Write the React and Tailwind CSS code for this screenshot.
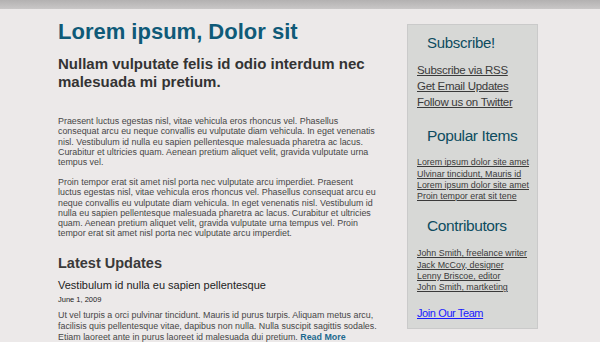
export default function App() {
    const popular = [
        "Lorem ipsum dolor site amet",
        "Ulvinar tincidunt, Mauris id",
        "Lorem ipsum dolor site amet",
        "Proin tempor erat sit tene",
    ];
    const contributors = [
        "John Smith, freelance writer",
        "Jack McCoy, designer",
        "Lenny Briscoe, editor",
        "John Smith, martketing",
    ];

    return (
        <div className="min-h-screen bg-[#ece9e9] font-['Liberation_Sans',Arial,sans-serif] text-[#474747]">
            {/* top strip */}
            <div className="h-[9px] bg-gradient-to-b from-[#b3b1b1] to-[#c9c7c7]" />

            <div className="flex pl-[58px]">
                {/* main column */}
                <div className="w-[320px]">
                    <h1 className="mt-[9.5px] text-[22px] font-bold leading-[26px] text-[#0f5a78]">Lorem ipsum, Dolor sit</h1>
                    <h2 className="mt-[10px] text-[15px] font-bold leading-[18.3px] text-[#333]">
                        Nullam vulputate felis id odio interdum nec malesuada mi pretium.
                    </h2>

                    <p className="mt-[25px] text-[8.9px] leading-[10.2px]">
                        Praesent luctus egestas nisl, vitae vehicula eros rhoncus vel. Phasellus consequat arcu eu neque convallis eu vulputate diam vehicula. In eget venenatis nisl. Vestibulum id nulla eu sapien pellentesque malesuada pharetra ac lacus. Curabitur et ultricies quam. Aenean pretium aliquet velit, gravida vulputate urna tempus vel.
                    </p>
                    <p className="mt-[10px] text-[8.9px] leading-[10.2px]">
                        Proin tempor erat sit amet nisl porta nec vulputate arcu imperdiet. Praesent luctus egestas nisl, vitae vehicula eros rhoncus vel. Phasellus consequat arcu eu neque convallis eu vulputate diam vehicula. In eget venenatis nisl. Vestibulum id nulla eu sapien pellentesque malesuada pharetra ac lacus. Curabitur et ultricies quam. Aenean pretium aliquet velit, gravida vulputate urna tempus vel. Proin tempor erat sit amet nisl porta nec vulputate arcu imperdiet.
                    </p>

                    <h3 className="mt-[17px] text-[14.5px] font-bold leading-[17px] text-[#3a3a3a]">Latest Updates</h3>
                    <h4 className="mt-[6.5px] text-[11px] leading-[13px] text-[#222]">Vestibulum id nulla eu sapien pellentesque</h4>
                    <div className="mt-[3px] text-[7.5px] leading-[9px] text-[#222]">June 1, 2009</div>
                    <p className="mt-[6px] text-[8.9px] leading-[11px]">
                        Ut vel turpis a orci pulvinar tincidunt. Mauris id purus turpis. Aliquam metus arcu, facilisis quis pellentesque vitae, dapibus non nulla. Nulla suscipit sagittis sodales. Etiam laoreet ante in purus laoreet id malesuada dui pretium.{" "}
                        <a href="#" className="font-bold text-[#1d6a8f]">Read More</a>
                    </p>
                </div>

                {/* sidebar */}
                <aside className="ml-[29px] mt-[15.3px] w-[131px] self-start border border-[#cacaca] bg-[#d7d8d6] pb-[7px] pl-[9px] pr-[2px] pt-[8.4px]">
                    <h3 className="pl-[10px] text-[15px] leading-[18px] tracking-[-0.3px] text-[#0d4c5f]">Subscribe!</h3>
                    <ul className="mt-[10px] text-[11.5px] leading-[16px] tracking-[-0.3px] text-[#3a3a3a]">
                        <li><a href="#" className="underline">Subscribe via RSS</a></li>
                        <li><a href="#" className="underline">Get Email Updates</a></li>
                        <li><a href="#" className="underline">Follow us on Twitter</a></li>
                    </ul>

                    <h3 className="mt-[17.4px] pl-[10px] text-[15.5px] leading-[18px] tracking-[-0.4px] text-[#0d4c5f]">Popular Items</h3>
                    <ul className="mt-[12.4px] text-[8.9px] leading-[11.2px] text-[#3a3a3a]">
                        {popular.map((item, i) => (
                            <li key={i}><a href="#" className="underline">{item}</a></li>
                        ))}
                    </ul>

                    <h3 className="mt-[15px] pl-[10px] text-[15.5px] leading-[18px] tracking-[-0.4px] text-[#0d4c5f]">Contributors</h3>
                    <ul className="mt-[13px] text-[8.9px] leading-[11.3px] text-[#3a3a3a]">
                        {contributors.map((item, i) => (
                            <li key={i}><a href="#" className="underline">{item}</a></li>
                        ))}
                    </ul>

                    <a href="#" className="mt-[11.5px] block text-[11px] leading-[16px] tracking-[-0.4px] text-[#1a1aff] underline">Join Our Team</a>
                </aside>
            </div>
        </div>
    );
}
